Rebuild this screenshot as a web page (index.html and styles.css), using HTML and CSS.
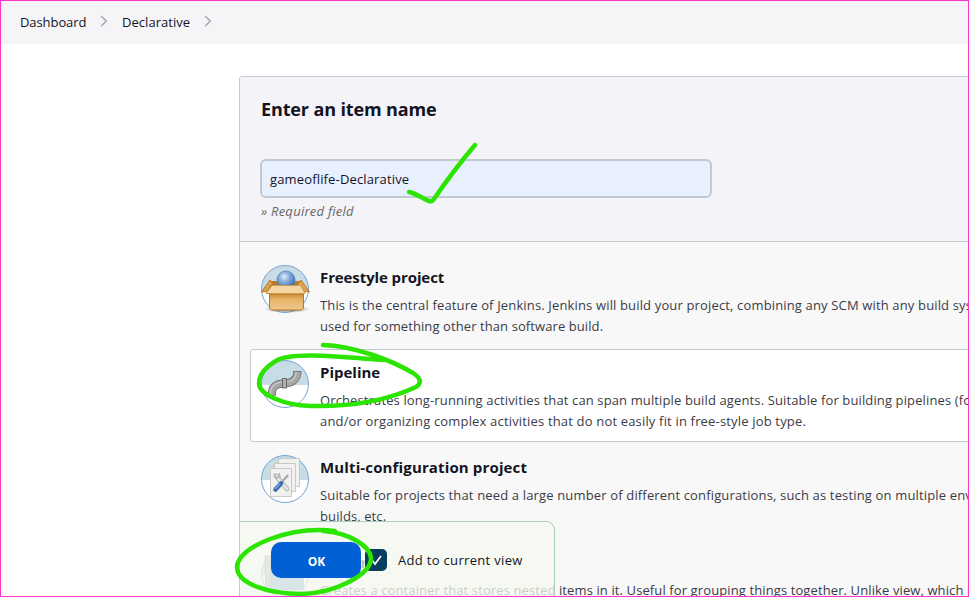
FILE: index.html
```html
<!DOCTYPE html>
<html lang="en">
<head>
<meta charset="utf-8">
<title>New Item [Jenkins]</title>
<link rel="stylesheet" href="styles.css">
</head>
<body>
<div class="screen">
  <nav class="crumbs">
    <a class="crumb-home">Dashboard</a>
    <svg width="8" height="12" viewBox="0 0 8 12"><path d="M1.5 1.5 6.3 6 1.5 10.7"/></svg>
    <a class="crumb-view">Declarative</a>
    <svg width="8" height="12" viewBox="0 0 8 12"><path d="M1.5 1.5 6.3 6 1.5 10.7"/></svg>
  </nav>
  <main class="panel">
    <header class="name-box">
      <h1><span>Enter an item name</span></h1>
      <div class="field"><span>gameoflife-Declarative</span></div>
      <p class="hint"><span>» Required field</span></p>
    </header>
    <ul class="items">
      <li class="item">
        <svg class="icon" viewBox="0 0 50 50">
          <defs>
            <linearGradient id="box" x2="0" y2="1"><stop offset="0" stop-color="#c98d3b"/><stop offset=".35" stop-color="#e6b468"/><stop offset="1" stop-color="#efc98e"/></linearGradient>
            <radialGradient id="ball" cx=".4" cy=".32" r=".65"><stop offset="0" stop-color="#e3eefa"/><stop offset=".4" stop-color="#8fb2dd"/><stop offset="1" stop-color="#4272b4"/></radialGradient>
            <linearGradient id="disc" x2="0" y2="1"><stop offset=".52" stop-color="#c7dce5"/><stop offset=".52" stop-color="#fff"/></linearGradient>
            <radialGradient id="shade"><stop offset=".5" stop-color="#555" stop-opacity=".5"/><stop offset="1" stop-color="#777" stop-opacity="0"/></radialGradient>
          </defs>
          <circle cx="25" cy="25" r="23.5" fill="url(#disc)" stroke="#76a5d8"/>
          <ellipse cx="27" cy="45" rx="23" ry="4" fill="url(#shade)"/>
          <path d="M9 17h32l1 13H8z" fill="#b87a2c"/>
          <path d="M10 16 1.500 28l5-.5 6-8zM41 16l8.500 12-5-.5-7-7z" fill="#dca351" stroke="#b5792b"/>
          <circle cx="26" cy="16" r="9" fill="url(#ball)" stroke="#4e79b4" stroke-width=".7"/>
          <path d="M9.500 30h34v14l-2 2h-30l-2-2z" fill="url(#box)" stroke="#b9761e"/>
          <path d="M12 21.500h29l4 8H6z" fill="#f5d5a2" stroke="#cb994f"/>
        </svg>
        <div class="copy"><h2><span class="t1">Freestyle project</span></h2>
          <p><span class="a1">This is the central feature of Jenkins. Jenkins will build your project, combining any SCM with any build system, and this can be even</span></p>
          <p><span class="a2">used for something other than software build.</span></p></div>
      </li>
      <li class="item selected">
        <svg class="icon" viewBox="0 0 50 50">
          <circle cx="25" cy="25" r="23.500" fill="url(#disc)" stroke="#76a5d8"/>
          <path d="M12 37C11 27 17 24.500 24 24.500S37.500 21 37.500 12" fill="none" stroke="#6a6a6a" stroke-width="8"/>
          <path d="M12 36.300C11 27 17 24.500 24 24.500S37.500 21 37.500 12.700" fill="none" stroke="#a6a6a6" stroke-width="6.400"/>
          <path d="M10.500 35.500C10 27 16 23 24 23S36 20 36 13" fill="none" stroke="#c4c4c4" stroke-width="1.500"/>
          <path d="M22.500 19.500h4v9.500h-4z" fill="#b0b0b0" stroke="#666"/>
        </svg>
        <div class="copy"><h2><span class="t2">Pipeline</span></h2>
          <p><span class="b1">Orchestrates long-running activities that can span multiple build agents. Suitable for building pipelines (formerly known as workflows)</span></p>
          <p><span class="b2">and/or organizing complex activities that do not easily fit in free-style job type.</span></p></div>
      </li>
      <li class="item">
        <svg class="icon" viewBox="0 0 50 50">
          <circle cx="25" cy="25" r="23.500" fill="url(#disc)" stroke="#76a5d8"/>
          <g fill="#f1f1ef" stroke="#c4c4c0" stroke-width=".9"><path d="M18.500 4.500h21v28h-21z"/><path d="M14.500 9.500h21v28h-21z"/><path d="M10.500 14.500h21v28h-21z"/></g>
          <path d="M16 22 27 35" stroke="#aaa" stroke-width="4.500" stroke-linecap="round"/><path d="M16 22 27 35" stroke="#e4e4e3" stroke-width="3" stroke-linecap="round"/>
          <path d="M14 19.500 16 24l4-1-1-4" fill="none" stroke="#b4b4b2" stroke-width="1.500"/>
          <path d="M28 21 21 29" stroke="#a2a8ae" stroke-width="2"/>
          <path d="M15.500 35.500 21 29.500" stroke="#3e6dac" stroke-width="4.500" stroke-linecap="round"/><path d="M15 35 20 29.500" stroke="#7fa4d8" stroke-width="1.500"/>
        </svg>
        <div class="copy"><h2><span class="t3">Multi-configuration project</span></h2>
          <p><span class="c1">Suitable for projects that need a large number of different configurations, such as testing on multiple environments, platform-specific</span></p>
          <p><span class="c2">builds, etc.</span></p></div>
      </li>
      <li class="item">
        <svg class="icon" viewBox="0 0 50 50">
          <circle cx="25" cy="25" r="23.500" fill="url(#disc)" stroke="#76a5d8"/>
          <path d="M5 7h6v36H6z" fill="#b7b7a9" stroke="#888"/><path d="M10 13h34v28H9z" fill="#7ba2c4"/>
        </svg>
        <div class="copy"><h2><span class="t4">Folder</span></h2>
          <p><span class="d1">Creates a container that stores nested items in it. Useful for grouping things together. Unlike view, which is just a filter, a folder</span></p></div>
      </li>
    </ul>
  </main>
  <footer class="actions">
    <button class="ok">OK</button>
    <span class="check"><svg width="22" height="22" viewBox="0 0 22 22"><path d="m7 11 3 4 6-8"/></svg></span>
    <label><span>Add to current view</span></label>
  </footer>
  <svg class="marks" viewBox="0 0 969 597">
    <path d="M409 192C418 194 423 199 429 201Q432 202 434 199Q453 171 475 145"/>
    <path d="M323 345C354 346 391 360 413 373Q425 381 416 387C388 400 350 407 310 406C284 405 260 395 259 384C258 371 276 358 288 357C314 353 350 358 384 360"/>
    <path d="M335 531C290 526 238 546 237 567C237 584 269 594 302 594C335 593 371 575 371 558C370 546 350 533 323 531"/>
  </svg>
</div>
</body>
</html>
```
FILE: styles.css
```css
* { box-sizing: border-box; }
body { margin: 0; font-family: "Open Sans", "Noto Sans", sans-serif; color: #14141f; background: #fff; }
h1, h2, p, ul { margin: 0; padding: 0; }
.screen { position: relative; width: 969px; height: 597px; overflow: hidden; }
.screen::after { content: ""; position: absolute; inset: 0; border: 1px solid #ff33cc; }
.crumbs { height: 44px; background: #f5f5f8; display: flex; align-items: center; padding-left: 20px; font-size: 13px; font-weight: 500; }
.crumbs a { white-space: nowrap; }
.crumb-home { width: 67px; letter-spacing: -.08px; }
.crumb-view { width: 69px; letter-spacing: .04px; }
.crumbs svg { margin: 0 14px 2px 13px; fill: none; stroke: #a6a6b8; stroke-width: 1.5; stroke-linecap: round; }
.panel { margin: 32px 0 0 239px; width: 760px; height: 560px; border: 1px solid #bfcbd1; border-radius: 3px; background: #f8f8f8; overflow: hidden; }
.name-box { height: 165px; background: #f4f3f8; border-bottom: 1px solid #bfcbd1; padding: 18px 21px 0 20px; }
h1 { font-size: 18px; line-height: 28px; font-weight: 700; padding-left: 1px; letter-spacing: -.13px; }
.field { width: 452px; height: 39px; margin-top: 36px; border: 2px solid #bfcad0; border-radius: 6px; background: #e8f0fe; font-size: 13px; line-height: 36px; padding-left: 8px; letter-spacing: .15px; }
.hint { font-size: 13px; line-height: 20px; margin-top: 3px; padding-left: 1px; font-style: italic; color: #666; letter-spacing: .26px; }
.items { list-style: none; padding: 12px 0 0 10px; }
.item { display: flex; height: 93px; margin-bottom: 2px; border: 1px solid transparent; border-radius: 3px; padding: 9px 0 0 9px; }
.selected { background: #fff; border-color: #bfcbd1; }
.icon { flex: none; width: 50px; height: 50px; }
.copy { padding: 1px 0 0 10px; white-space: nowrap; }
h2 { font-size: 15px; line-height: 24px; font-weight: 700; margin-bottom: 6px; }
.t1 { letter-spacing: -.1px; }
.t3 { letter-spacing: .14px; }
.copy p { font-size: 13px; line-height: 21px; color: #3b3b47; }
.a1 { letter-spacing: .15px; }
.a2 { letter-spacing: .09px; }
.b1 { letter-spacing: .125px; }
.b2 { letter-spacing: .17px; }
.c1 { letter-spacing: .155px; }
.c2 { letter-spacing: .1px; }
.d1 { letter-spacing: .11px; }
.actions { position: absolute; left: 240px; top: 521px; width: 315px; height: 90px; background: rgba(245, 249, 240, .77); border: 1px solid #a9ceb9; border-left: 0; border-radius: 0 9px 0 0; display: flex; padding: 20px 0 0 31px; }
.ok { width: 90px; height: 36px; border: 0; border-radius: 10px; background: #0060d4; color: #fff; font: 700 12px "Open Sans", sans-serif; padding: 2px 0 0 1px; }
.check { width: 22px; height: 22px; margin: 7px 12px 0 4px; background: #073e60; border-radius: 5px; }
.check svg { display: block; fill: none; stroke: #fff; stroke-width: 1.7; }
.actions label { font-size: 13px; line-height: 36px; white-space: nowrap; letter-spacing: .32px; margin-left: -1px; }
.marks { position: absolute; left: 0; top: 0; width: 969px; height: 597px; fill: none; stroke: #2be400; stroke-width: 4.5; stroke-linecap: round; stroke-linejoin: round; }
```
